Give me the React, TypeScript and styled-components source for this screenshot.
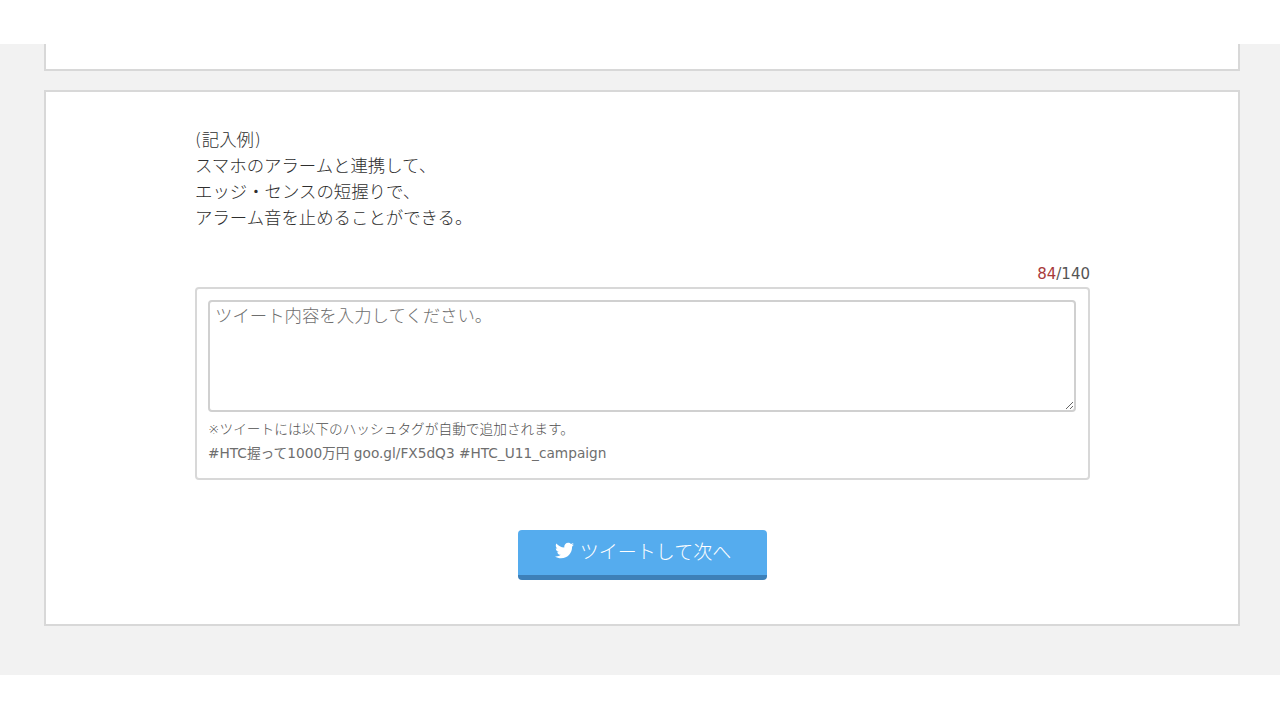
import React from "react";
import styled, { createGlobalStyle } from "styled-components";
import { FaTwitter } from "react-icons/fa";

const FONT = `"DejaVu Sans", "Noto Sans CJK JP", sans-serif`;

const Global = createGlobalStyle`
  html, body { margin: 0; padding: 0; background: #fff; }
  body { font-family: ${FONT}; color: #555; height: 720px; overflow: hidden; }
  * { box-sizing: border-box; }
`;

const Page = styled.div`
  padding-top: 44px;
  padding-bottom: 45px;
`;

const Main = styled.main`
  background: #f2f2f2;
  padding: 0 40px 49px 44px;
  display: flex;
  flex-direction: column;
  gap: 19px;
  height: 631px;
`;

const PreviousCard = styled.div`
  height: 27px;
  background: #fff;
  border: 2px solid #d8d8d8;
  border-top: 0;
`;

const Card = styled.section`
  height: 536px;
  background: #fff;
  border: 2px solid #d8d8d8;
  padding: 35px 148px 0 149px;
`;

const Example = styled.p`
  margin: 0;
  font-size: 17.4px;
  font-weight: 300;
  line-height: 26px;
  color: #2e2e2e;
`;

const Counter = styled.div`
  margin-top: 32px;
  height: 22px;
  text-align: right;
  font-size: 15px;
  line-height: 22px;
  color: #555;
`;

const Count = styled.span`
  color: #a83a3a;
`;

const TweetBox = styled.div`
  margin-top: 2px;
  height: 193px;
  border: 2px solid #d8d8d8;
  border-radius: 4px;
  padding: 11px 12px 0 11px;
`;

const TweetInput = styled.textarea`
  display: block;
  width: 100%;
  height: 112px;
  border: 2px solid #d0d0d0;
  border-radius: 4px;
  padding: 1px 5px;
  margin: 0;
  outline: none;
  font-family: ${FONT};
  font-size: 17.4px;
  font-weight: 300;
  line-height: 26px;
  color: #444;
  &::placeholder { color: #6e6e6e; opacity: 1; }
`;

const Note = styled.p<{ $tags?: boolean }>`
  margin: 0;
  font-size: 13.7px;
  font-weight: ${(p) => (p.$tags ? 400 : 300)};
  line-height: 24px;
  color: ${(p) => (p.$tags ? "#6e6e6e" : "#505050")};
  &:first-of-type { margin-top: 5px; }
`;

const ButtonRow = styled.div`
  margin-top: 50px;
  display: flex;
  justify-content: center;
`;

const TweetButton = styled.button`
  width: 249px;
  height: 50px;
  border: 0;
  border-bottom: 5px solid #3d80b8;
  border-radius: 4px;
  background: #55acee;
  color: #fff;
  font-family: ${FONT};
  font-size: 19px;
  font-weight: 300;
  padding: 0 0 4px 1px;
  display: flex;
  align-items: center;
  justify-content: center;
  gap: 6px;
`;

export default function App() {
  return (
    <Page>
      <Global />
      <Main>
        <PreviousCard />
        <Card>
          <Example>
            (記入例)<br />
            スマホのアラームと連携して、<br />
            エッジ・センスの短握りで、<br />
            アラーム音を止めることができる。
          </Example>
          <Counter><Count>84</Count>/140</Counter>
          <TweetBox>
            <TweetInput placeholder="ツイート内容を入力してください。" />
            <Note>※ツイートには以下のハッシュタグが自動で追加されます。</Note>
            <Note $tags>#HTC握って1000万円 goo.gl/FX5dQ3 #HTC_U11_campaign</Note>
          </TweetBox>
          <ButtonRow>
            <TweetButton><FaTwitter size={19} />ツイートして次へ</TweetButton>
          </ButtonRow>
        </Card>
      </Main>
    </Page>
  );
}
